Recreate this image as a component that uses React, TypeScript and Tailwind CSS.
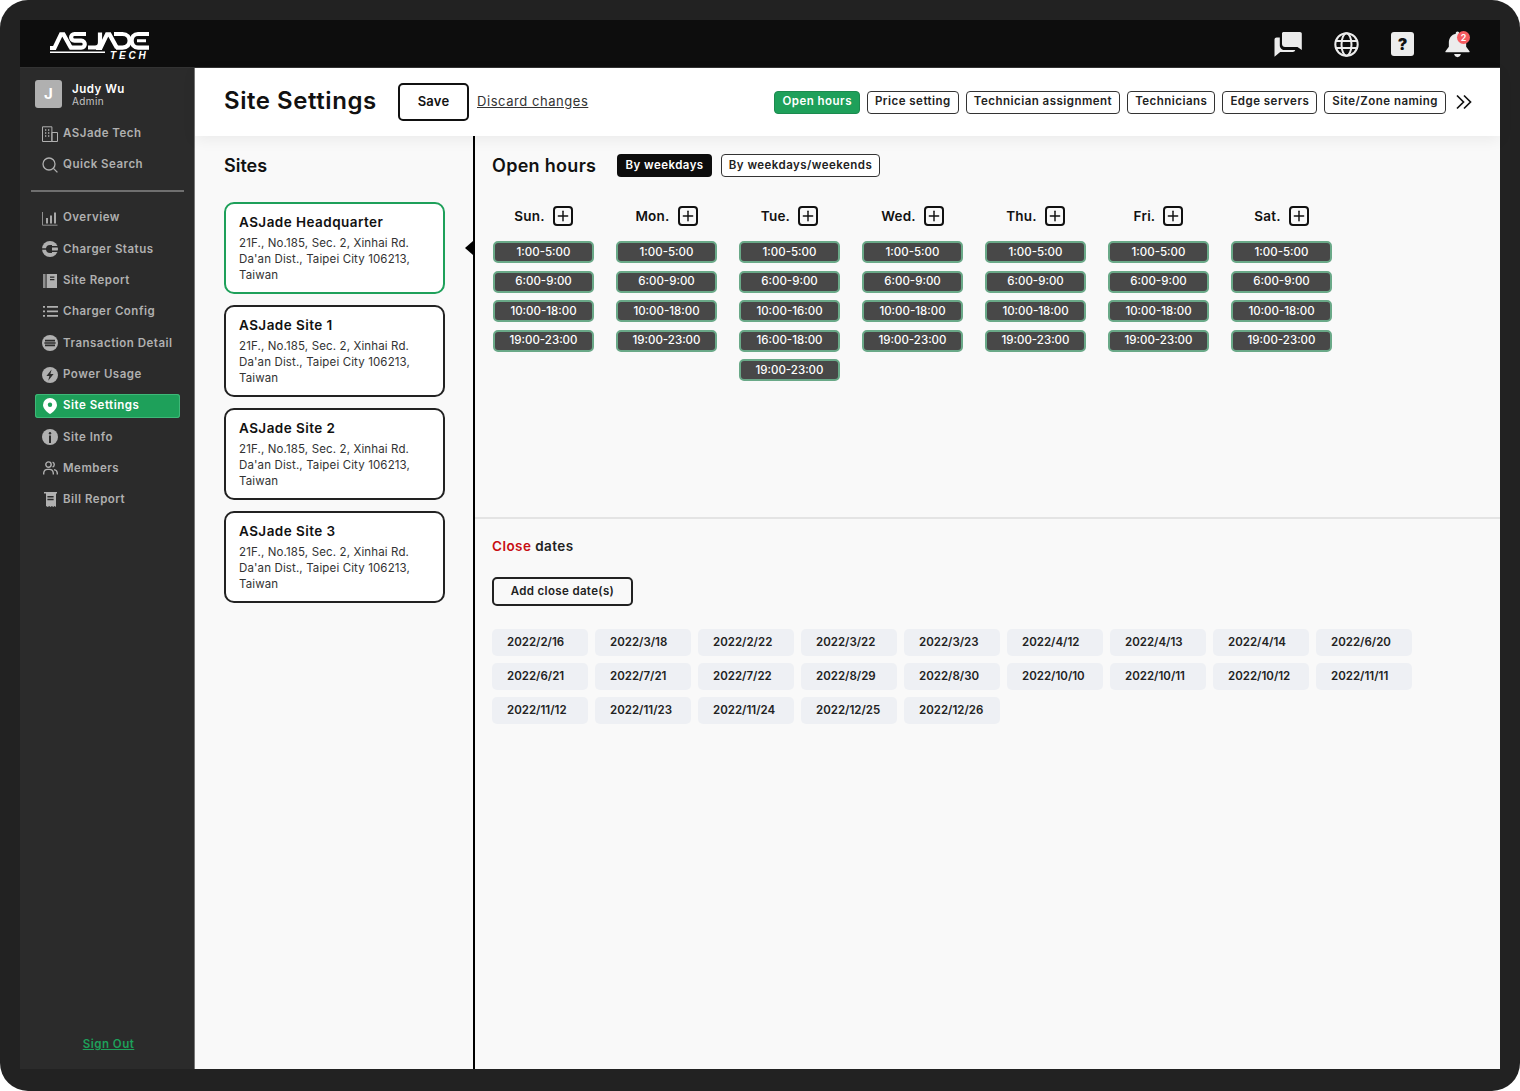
import { Plus } from "lucide-react";

const nav = [
  { id: "overview", label: "Overview", icon: <OverviewIcon /> },
  { id: "status", label: "Charger Status", icon: <StatusIcon /> },
  { id: "report", label: "Site Report", icon: <BookIcon /> },
  { id: "config", label: "Charger Config", icon: <ListIcon /> },
  { id: "transaction", label: "Transaction Detail", icon: <TransactionIcon /> },
  { id: "power", label: "Power Usage", icon: <PowerIcon /> },
  { id: "settings", label: "Site Settings", icon: <PinIcon />, active: true },
  { id: "info", label: "Site Info", icon: <InfoIcon /> },
  { id: "members", label: "Members", icon: <MembersIcon /> },
  { id: "bill", label: "Bill Report", icon: <BillIcon /> },
];

const tabs = ["Open hours", "Price setting", "Technician assignment", "Technicians", "Edge servers", "Site/Zone naming"];

const sites = ["ASJade Headquarter", "ASJade Site 1", "ASJade Site 2", "ASJade Site 3"];

const baseHours = ["1:00-5:00", "6:00-9:00", "10:00-18:00", "19:00-23:00"];
const days = [
  { name: "Sun.", hours: baseHours },
  { name: "Mon.", hours: baseHours },
  { name: "Tue.", hours: ["1:00-5:00", "6:00-9:00", "10:00-16:00", "16:00-18:00", "19:00-23:00"] },
  { name: "Wed.", hours: baseHours },
  { name: "Thu.", hours: baseHours },
  { name: "Fri.", hours: baseHours },
  { name: "Sat.", hours: baseHours },
];

const closeDates = [
  "2022/2/16", "2022/3/18", "2022/2/22", "2022/3/22", "2022/3/23", "2022/4/12", "2022/4/13", "2022/4/14", "2022/6/20",
  "2022/6/21", "2022/7/21", "2022/7/22", "2022/8/29", "2022/8/30", "2022/10/10", "2022/10/11", "2022/10/12", "2022/11/11",
  "2022/11/12", "2022/11/23", "2022/11/24", "2022/12/25", "2022/12/26",
];

function OverviewIcon() {
  return (
    <svg width="16" height="15" viewBox="0 0 16 15" fill="none">
      <path d="M.5 1v13.2h15" stroke="#8f8f8f" />
      <path d="M4 7h2v5.5H4zM8 4.5h2v8H8zM12 1.5h2v11h-2z" fill="#a8a8a8" />
    </svg>
  );
}

function StatusIcon() {
  return (
    <svg width="16" height="16" viewBox="0 0 16 16">
      <circle cx="8" cy="8" r="8" fill="#b0b0b0" />
      <path d="M0 7.200h4.500v1.600H0zM4 8a4 4 0 0 1 4-4h2v8H8a4 4 0 0 1-4-4zM10 5h6v1.600h-6zM10 9.400h6V11h-6z" fill="#2b2b2b" />
    </svg>
  );
}

function BookIcon() {
  return (
    <svg width="14" height="16" viewBox="0 0 14 16">
      <path d="M0 1h2.600v14H0z" fill="#8f8f8f" />
      <path d="M3.600 1H14v14H3.600z" fill="#b0b0b0" />
      <path d="M7 3.600h4.400v1.200H7zM7 6h4.400v1.200H7z" fill="#2b2b2b" />
    </svg>
  );
}

function ListIcon() {
  return (
    <svg width="15" height="11" viewBox="0 0 15 11" fill="#b0b0b0">
      <path d="M0 0h2v1.800H0zM0 4.500h2v1.800H0zM0 9h2v1.800H0zM4 0h11v1.800H4zM4 4.500h11v1.800H4zM4 9h11v1.800H4z" />
    </svg>
  );
}

function TransactionIcon() {
  return (
    <svg width="16" height="16" viewBox="0 0 16 16">
      <circle cx="8" cy="8" r="8" fill="#b0b0b0" />
      <path d="M3 4.800h10v1.600H3zM2.400 7.200h11.200v1.600H2.400zM3 9.600h10v1.600H3z" fill="#2b2b2b" />
    </svg>
  );
}

function PowerIcon() {
  return (
    <svg width="16" height="16" viewBox="0 0 16 16">
      <circle cx="8" cy="8" r="8" fill="#b0b0b0" />
      <path d="M9.600 2.400 4.400 9h3l-1.200 4.800L11.600 7H8.400z" fill="#2b2b2b" />
    </svg>
  );
}

function PinIcon() {
  return (
    <svg width="14" height="16" viewBox="0 0 14 16">
      <path d="M7 0a7 7 0 0 1 7 7c0 3.600-3.600 6.800-7 9-3.400-2.200-7-5.400-7-9a7 7 0 0 1 7-7z" fill="#fff" />
      <circle cx="7" cy="6.800" r="2.200" fill="#1ea05a" />
    </svg>
  );
}

function InfoIcon() {
  return (
    <svg width="16" height="16" viewBox="0 0 16 16">
      <circle cx="8" cy="8" r="8" fill="#b0b0b0" />
      <path d="M7 6.600h2V14H7z" fill="#2b2b2b" />
      <circle cx="8" cy="4.200" r="1.200" fill="#2b2b2b" />
    </svg>
  );
}

function MembersIcon() {
  return (
    <svg width="15" height="14" viewBox="0 0 15 14" fill="none" stroke="#b0b0b0" strokeWidth="1.400">
      <circle cx="5.500" cy="3.600" r="2.700" />
      <path d="M.7 13.400V12a4 4 0 0 1 4-3.600h1.600a4 4 0 0 1 4 3.600v1.400" />
      <path d="M9.600 1.100a2.700 2.700 0 0 1 0 5M11 8.600a3.800 3.800 0 0 1 3.300 3.400v1.400" />
    </svg>
  );
}

function BillIcon() {
  return (
    <svg width="13" height="15" viewBox="0 0 13 15">
      <path d="M0 0h13v1.600h-1V15l-1.400-1-1.400 1-1.300-1-1.400 1-1.300-1-1.400 1-1.800-1V1.600H0z" fill="#b0b0b0" />
      <path d="M3.400 4h6.200v1.400H3.400zM3.400 6.800h6.200v1.400H3.400z" fill="#2b2b2b" />
    </svg>
  );
}

function BuildingIcon() {
  return (
    <svg width="16" height="16" viewBox="0 0 16 16" fill="none" stroke="#b0b0b0">
      <path d="M.5.800h9.400v14.700H.5zM9.900 6.500h5.600v9H9.900z" />
      <path d="M3 4h1.300M6 4h1.300M3 7h1.300M6 7h1.300M3 10h1.300M6 10h1.300" strokeWidth="1.300" />
    </svg>
  );
}

function SearchIcon() {
  return (
    <svg width="16" height="16" viewBox="0 0 16 16" fill="none" stroke="#b0b0b0" strokeWidth="1.300">
      <circle cx="7" cy="7" r="6" />
      <path d="m11.400 11.400 4 4" />
    </svg>
  );
}

function Logo() {
  return (
    <svg width="100" height="32" viewBox="0 0 100 32" fill="none" stroke="#fff" strokeWidth="4.200">
      <g transform="translate(0 3)">
        <path d="M0 17h4.500L11 3.400h2.500L21 17" />
        <path d="M36 3H24.500c-4.500 0-4.500 6.700 0 6.700h6.800c4.600 0 4.600 6.900 0 6.900H19.500" />
        <path d="M50 1.500v10c0 3.500-2 5-5 5H38" />
        <path d="M46 17h4.500L57 3.400h2.500L67 17" />
        <path d="M64 3h8.500c9.500 0 9.500 13.600 0 13.600H66" />
        <path d="M99 3h-11c-8.500 0-8.500 13.600 0 13.600h11" />
        <path d="M87 9.800h9" strokeWidth="3" />
        <path d="M0 21.200h55" strokeWidth="1.600" />
      </g>
      <text x="60" y="31" fill="#fff" stroke="none" fontSize="10" fontStyle="italic" fontWeight="700" letterSpacing="2.800" fontFamily="'Liberation Sans', sans-serif">
        TECH
      </text>
    </svg>
  );
}

function ChatIcon() {
  return (
    <svg width="28" height="25" viewBox="0 0 28 25" fill="#ececec">
      <path d="M8 1.500C8 .7 8.700 0 9.500 0H26c1 0 1.800.8 1.800 1.800V18l-4.300-3H11c-1.500 0-3-1.300-3-3z" />
      <path d="M5.800 5.500v8c0 2.600 2.200 4.600 4.600 4.600h10.800c-.2 1.200-1.200 2-2.400 2H6.200L.5 24.800V7.600c0-1.200 1-2.100 2.100-2.100z" />
    </svg>
  );
}

function GlobeIcon() {
  return (
    <svg width="25" height="25" viewBox="0 0 25 25" fill="none" stroke="#ececec" strokeWidth="2">
      <circle cx="12.500" cy="12.500" r="11.200" />
      <ellipse cx="12.500" cy="12.500" rx="5" ry="11.200" />
      <path d="M1.800 9h21.400M1.800 16h21.400" />
    </svg>
  );
}

function HelpIcon() {
  return (
    <div className="flex h-[24px] w-[23px] items-center justify-center rounded-[3px] bg-[#ececec] text-[16px] font-black leading-none text-[#111]">
      ?
    </div>
  );
}

function BellIcon() {
  return (
    <div className="relative -ml-px h-[27px] w-[25px]">
      <svg width="25" height="27" viewBox="0 0 26 27" fill="#ececec">
        <path d="M13 0c1 0 1.800.8 1.800 1.800v.6c4.400.9 7.200 4.600 7.200 9v4.400l3.500 4.700c.3.500 0 1.100-.6 1.100H1.100c-.6 0-.9-.6-.6-1.100L4 15.800v-4.400c0-4.400 2.800-8.100 7.200-9v-.6C11.200.8 12 0 13 0z" />
        <path d="M9.500 23.500h7c-.3 2-1.700 3.200-3.500 3.200s-3.200-1.200-3.500-3.200z" />
      </svg>
      <span className="absolute right-0 top-0 flex h-[13px] w-[13px] items-center justify-center rounded-full bg-[#f65a5f] text-[9px] font-semibold leading-none text-white">
        2
      </span>
    </div>
  );
}

export default function App() {
  return (
    <div className="h-[1091px] w-[1520px] overflow-hidden bg-white font-['Inter',sans-serif]">
      <div className="flex h-full w-full flex-col overflow-hidden rounded-[28px] bg-[#222222] px-[20px] pb-[22px] pt-[20px]">
        <header className="flex h-[48px] shrink-0 items-center justify-between border-b border-[#333] bg-[#0d0d0d] pl-[30px] pr-[30px]">
          <Logo />
          <div className="mt-[1px] flex items-center gap-[32px]">
            <ChatIcon />
            <GlobeIcon />
            <HelpIcon />
            <BellIcon />
          </div>
        </header>

        <div className="flex min-h-0 flex-1">
          <aside className="flex w-[175px] shrink-0 flex-col border-r border-[#777] bg-[#2b2b2b]">
            <div className="flex items-center gap-[10px] pl-[15px] pt-[12px]">
              <div className="flex h-[28px] w-[27px] items-center justify-center rounded-[3px] bg-[#b0b0b0] text-[15px] font-bold text-white">J</div>
              <div>
                <div className="text-[11.500px] font-semibold leading-[14px] tracking-[0.5px] text-white">Judy Wu</div>
                <div className="text-[10px] leading-[11px] tracking-[0.4px] text-[#c4c4c4]">Admin</div>
              </div>
            </div>
            <div className="mt-[10px] flex flex-col">
              <SideItem icon={<BuildingIcon />} label="ASJade Tech" />
              <SideItem icon={<SearchIcon />} label="Quick Search" />
            </div>
            <div className="ml-[11px] mt-[9px] h-[2px] w-[153px] bg-[#6f6f6f]" />
            <nav className="mt-[11px] flex flex-col">
              {nav.map((item) => (
                <SideItem key={item.id} icon={item.icon} label={item.label} active={item.active} />
              ))}
            </nav>
            <div className="mt-auto pb-[16px] pl-[3px] text-center text-[11.500px] font-semibold tracking-[0.5px] text-[#1ea05a] underline">Sign Out</div>
          </aside>

          <main className="flex min-w-0 flex-1 flex-col bg-[#f9f9f9]">
            <div className="relative z-10 flex h-[68px] shrink-0 items-center bg-white pl-[29px] pr-[28px] shadow-[0_4px_14px_rgba(0,0,0,0.06)]">
              <h1 className="-mt-[2px] w-[174px] text-[24px] font-semibold tracking-[0.55px] text-[#111]">Site Settings</h1>
              <button className="h-[38px] w-[71px] rounded-[5px] border-2 border-[#111] bg-white text-[13px] font-semibold tracking-[0.2px] text-[#111]">Save</button>
              <span className="ml-[8px] text-[13px] tracking-[0.55px] text-[#333] underline">Discard changes</span>
              <div className="ml-auto flex items-center gap-[7px]">
                {tabs.map((tab, i) => (
                  <div
                    key={tab}
                    className={
                      i === 0
                        ? "flex h-[23px] items-center rounded-[4px] border border-[#1c8a4f] bg-[#1ea05a] px-[7px] text-[11.500px] font-semibold tracking-[0.48px] text-white"
                        : "flex h-[23px] items-center rounded-[4px] border border-[#333] bg-white px-[7px] text-[11.500px] font-semibold tracking-[0.48px] text-[#222]"
                    }
                  >
                    {tab}
                  </div>
                ))}
                <svg className="ml-[3px]" width="16" height="16" viewBox="0 0 16 16" fill="none" stroke="#111" strokeWidth="1.700">
                  <path d="m1 1.500 6.500 6.500L1 14.500M8 1.500 14.500 8 8 14.500" />
                </svg>
              </div>
            </div>

            <div className="flex min-h-0 flex-1">
              <section className="relative w-[280px] shrink-0 border-r-2 border-black pl-[29px]">
                <h2 className="mt-[19px] text-[18px] font-semibold leading-[22px] text-[#111]">Sites</h2>
                <div className="mt-[25px] flex w-[221px] flex-col gap-[11px]">
                  {sites.map((site, i) => (
                    <div
                      key={site}
                      className={
                        i === 0
                          ? "h-[92px] rounded-[10px] border-2 border-[#1ea05a] bg-white px-[13px] pt-[9px]"
                          : "h-[92px] rounded-[10px] border-2 border-[#222] bg-white px-[13px] pt-[9px]"
                      }
                    >
                      <div className="text-[13.500px] font-semibold leading-[19px] tracking-[0.45px] text-[#111]">{site}</div>
                      <p className="mt-[3px] text-[11.500px] leading-[16px] tracking-[0.13px] text-[#333]">
                        21F., No.185, Sec. 2, Xinhai Rd.
                        <br />
                        Da'an Dist., Taipei City 106213,
                        <br />
                        Taiwan
                      </p>
                    </div>
                  ))}
                </div>
                <div className="absolute right-0 top-[105px] h-0 w-0 border-y-[7px] border-r-[8px] border-y-transparent border-r-black" />
              </section>

              <section className="flex min-w-0 flex-1 flex-col">
                <div className="h-[383px] shrink-0 border-b-2 border-[#e4e4e4] pl-[18px]">
                  <div className="flex items-center pt-[18px]">
                    <h2 className="-ml-px w-[125px] text-[18px] font-semibold leading-[23px] tracking-[0.3px] text-[#111]">Open hours</h2>
                    <div className="flex h-[23px] w-[95px] items-center justify-center rounded-[4px] bg-[#0d0d0d] text-[11.500px] font-semibold tracking-[0.45px] text-white">By weekdays</div>
                    <div className="ml-[9px] flex h-[23px] w-[159px] items-center justify-center rounded-[4px] border border-[#333] bg-white text-[11.500px] font-semibold tracking-[0.45px] text-[#222]">By weekdays/weekends</div>
                  </div>
                  <div className="mt-[29px] flex gap-[22px]">
                    {days.map((day) => (
                      <div key={day.name} className="w-[101px]">
                        <div className="flex h-[20px] items-center justify-center gap-[8px]">
                          <span className="text-[13.500px] font-semibold tracking-[0.2px] text-[#111]">{day.name}</span>
                          <span className="flex h-[20px] w-[20px] items-center justify-center rounded-[4px] border-2 border-[#111]">
                            <Plus className="h-[16px] w-[16px] text-[#111]" strokeWidth={2.200} />
                          </span>
                        </div>
                        <div className="mt-[15px] flex flex-col gap-[7.500px]">
                          {day.hours.map((h) => (
                            <div key={h} className="flex h-[22px] items-center justify-center rounded-[5px] border-2 border-[#6aa988] bg-[#484848] pt-px text-[11.500px] font-medium text-white">
                              {h}
                            </div>
                          ))}
                        </div>
                      </div>
                    ))}
                  </div>
                </div>
                <div className="pl-[17px]">
                  <h3 className="mt-[18px] text-[13.500px] font-semibold leading-[18px] tracking-[0.45px] text-[#222]">
                    <span className="text-[#c80e13]">Close</span> dates
                  </h3>
                  <button className="mt-[22px] h-[29px] w-[141px] rounded-[5px] border-2 border-[#222] text-[11.500px] font-semibold tracking-[0.35px] text-[#222]">Add close date(s)</button>
                  <div className="mt-[23px] grid w-[920px] grid-cols-[repeat(9,96px)] gap-x-[7px] gap-y-[7px]">
                    {closeDates.map((d) => (
                      <div key={d} className="flex h-[27px] items-center rounded-[5px] bg-[#eef0f4] pl-[15px] pt-px text-[11.500px] font-semibold text-[#222]">
                        {d}
                      </div>
                    ))}
                  </div>
                </div>
              </section>
            </div>
          </main>
        </div>
      </div>
    </div>
  );
}

function SideItem({ icon, label, active }: { icon: React.ReactNode; label: string; active?: boolean }) {
  return (
    <div className="h-[31.300px] pl-[15px] pr-[14px] py-[3.500px]">
      <div className={active ? "flex h-[24px] items-center rounded-[3px] bg-[#1ea05a] ring-1 ring-inset ring-[#3fb878]" : "flex h-[24px] items-center"}>
        <span className="flex w-[28px] shrink-0 justify-center pl-[2px]">{icon}</span>
        <span className={active ? "text-[11.500px] font-semibold tracking-[0.5px] text-white" : "text-[11.500px] font-semibold tracking-[0.5px] text-[#b0b0b0]"}>{label}</span>
      </div>
    </div>
  );
}
